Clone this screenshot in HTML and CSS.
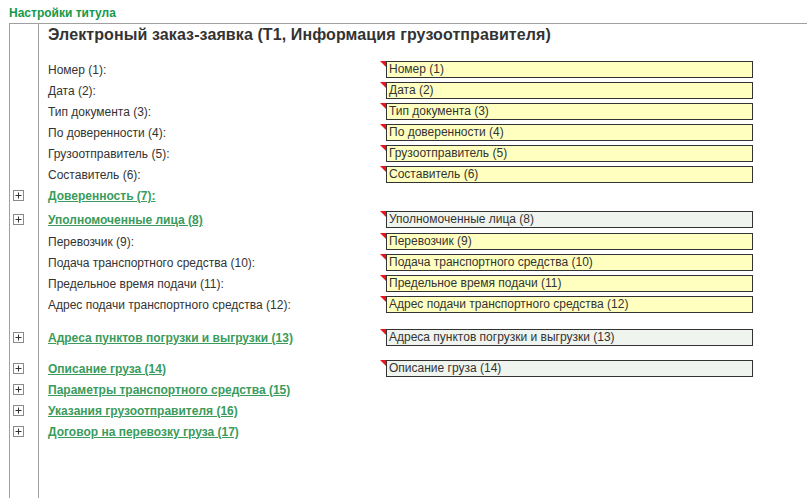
FILE: index.html
```html
<!DOCTYPE html>
<html lang="ru">
<head>
  <meta charset="UTF-8">
  <title>Настройки титула</title>
  <link rel="stylesheet" href="styles.css">
</head>
<body>
<div class="page-title">Настройки титула</div>

<div class="frame">
  <div class="heading">Электроный заказ-заявка (Т1, Информация грузоотправителя)</div>

  <div class="row"><span class="gutter"></span><span class="label">Номер (1):</span><span class="field"><i class="mark"></i><span class="box">Номер (1)</span></span></div>
  <div class="row"><span class="gutter"></span><span class="label">Дата (2):</span><span class="field"><i class="mark"></i><span class="box">Дата (2)</span></span></div>
  <div class="row"><span class="gutter"></span><span class="label">Тип документа (3):</span><span class="field"><i class="mark"></i><span class="box">Тип документа (3)</span></span></div>
  <div class="row"><span class="gutter"></span><span class="label">По доверенности (4):</span><span class="field"><i class="mark"></i><span class="box">По доверенности (4)</span></span></div>
  <div class="row"><span class="gutter"></span><span class="label">Грузоотправитель (5):</span><span class="field"><i class="mark"></i><span class="box">Грузоотправитель (5)</span></span></div>
  <div class="row"><span class="gutter"></span><span class="label">Составитель (6):</span><span class="field"><i class="mark"></i><span class="box">Составитель (6)</span></span></div>

  <div class="row"><span class="gutter"><svg class="plus" width="11" height="11" viewBox="0 0 11 11"><rect x="0.5" y="0.5" width="10" height="10" fill="#fff" stroke="#8a8a8a"/><path d="M2.5 5.5h6M5.5 2.5v6" stroke="#333"/></svg></span><a class="label link" href="#">Доверенность (7):</a></div>

  <div class="row gap-3"><span class="gutter"><svg class="plus" width="11" height="11" viewBox="0 0 11 11"><rect x="0.5" y="0.5" width="10" height="10" fill="#fff" stroke="#8a8a8a"/><path d="M2.5 5.5h6M5.5 2.5v6" stroke="#333"/></svg></span><a class="label link" href="#">Уполномоченные лица (8)</a><span class="field"><i class="mark"></i><span class="box group">Уполномоченные лица (8)</span></span></div>

  <div class="row gap-1"><span class="gutter"></span><span class="label">Перевозчик (9):</span><span class="field"><i class="mark"></i><span class="box">Перевозчик (9)</span></span></div>
  <div class="row"><span class="gutter"></span><span class="label">Подача транспортного средства (10):</span><span class="field"><i class="mark"></i><span class="box">Подача транспортного средства (10)</span></span></div>
  <div class="row"><span class="gutter"></span><span class="label">Предельное время подачи (11):</span><span class="field"><i class="mark"></i><span class="box">Предельное время подачи (11)</span></span></div>
  <div class="row"><span class="gutter"></span><span class="label">Адрес подачи транспортного средства (12):</span><span class="field"><i class="mark"></i><span class="box">Адрес подачи транспортного средства (12)</span></span></div>

  <div class="row gap-12"><span class="gutter"><svg class="plus" width="11" height="11" viewBox="0 0 11 11"><rect x="0.5" y="0.5" width="10" height="10" fill="#fff" stroke="#8a8a8a"/><path d="M2.5 5.5h6M5.5 2.5v6" stroke="#333"/></svg></span><a class="label link" href="#">Адреса пунктов погрузки и выгрузки (13)</a><span class="field"><i class="mark"></i><span class="box group">Адреса пунктов погрузки и выгрузки (13)</span></span></div>

  <div class="row gap-10"><span class="gutter"><svg class="plus" width="11" height="11" viewBox="0 0 11 11"><rect x="0.5" y="0.5" width="10" height="10" fill="#fff" stroke="#8a8a8a"/><path d="M2.5 5.5h6M5.5 2.5v6" stroke="#333"/></svg></span><a class="label link" href="#">Описание груза (14)</a><span class="field"><i class="mark"></i><span class="box group">Описание груза (14)</span></span></div>
  <div class="row"><span class="gutter"><svg class="plus" width="11" height="11" viewBox="0 0 11 11"><rect x="0.5" y="0.5" width="10" height="10" fill="#fff" stroke="#8a8a8a"/><path d="M2.5 5.5h6M5.5 2.5v6" stroke="#333"/></svg></span><a class="label link" href="#">Параметры транспортного средства (15)</a></div>
  <div class="row"><span class="gutter"><svg class="plus" width="11" height="11" viewBox="0 0 11 11"><rect x="0.5" y="0.5" width="10" height="10" fill="#fff" stroke="#8a8a8a"/><path d="M2.5 5.5h6M5.5 2.5v6" stroke="#333"/></svg></span><a class="label link" href="#">Указания грузоотправителя (16)</a></div>
  <div class="row"><span class="gutter"><svg class="plus" width="11" height="11" viewBox="0 0 11 11"><rect x="0.5" y="0.5" width="10" height="10" fill="#fff" stroke="#8a8a8a"/><path d="M2.5 5.5h6M5.5 2.5v6" stroke="#333"/></svg></span><a class="label link" href="#">Договор на перевозку груза (17)</a></div>
</div>
</body>
</html>
```

FILE: styles.css
```css
* { box-sizing: border-box; }
body {
  margin: 0;
  background-color: #ffffff;
  font-family: "Liberation Sans", Arial, sans-serif;
  font-size: 12px;
  color: #333333;
  overflow: hidden;
}
.page-title {
  height: 23px;
  padding: 5px 0 0 9px;
  line-height: 16px;
  font-weight: bold;
  color: #14994a;
}
.frame {
  margin-left: 9px;
  min-height: 475px;
  border-top: 1px solid #a0a0a0;
  border-left: 1px solid #a0a0a0;
  background: linear-gradient(#a0a0a0, #a0a0a0) 28px 0 / 1px 100% no-repeat;
}
.heading {
  padding-left: 38px;
  padding-top: 1px;
  height: 21px;
  line-height: 20px;
  margin-bottom: 14px;
  font-size: 16px;
  font-weight: bold;
  letter-spacing: 0.1px;
  color: #333333;
}
.row {
  display: flex;
  align-items: center;
  height: 21px;
}
.row.gap-1 { margin-top: 1px; }
.row.gap-3 { margin-top: 3px; }
.row.gap-10 { margin-top: 10px; }
.row.gap-12 { margin-top: 12px; }
.gutter {
  width: 38px;
  flex: none;
  padding-left: 3px;
  display: flex;
  align-items: center;
}
.plus { display: block; }
.label {
  width: 332px;
  flex: none;
  white-space: nowrap;
}
.link {
  color: #3a9b5c;
  font-weight: bold;
  text-decoration: underline;
}
.field {
  display: flex;
  align-items: flex-start;
  height: 17px;
}
.mark {
  width: 0;
  height: 0;
  border-top: 6px solid #e8141b;
  border-left: 6px solid transparent;
}
.box {
  width: 367px;
  height: 17px;
  border: 1px solid #333333;
  background-color: #ffffc0;
  padding-left: 2px;
  line-height: 15px;
  white-space: nowrap;
  color: #333333;
}
.box.group { background-color: #f0f4ef; }
```
